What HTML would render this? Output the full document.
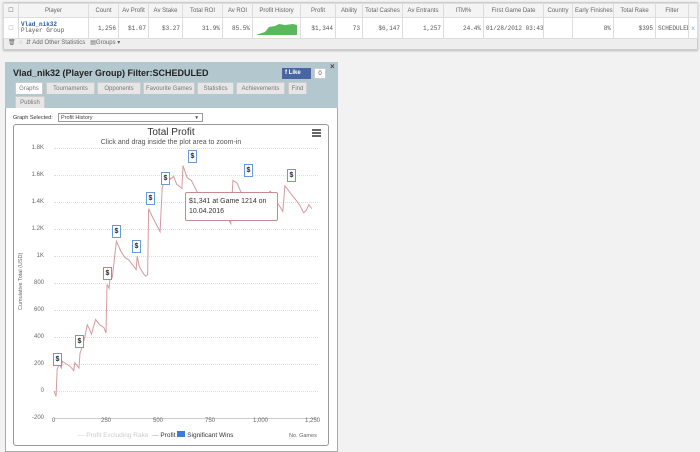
<!DOCTYPE html>
<html><head><meta charset="utf-8"><style>
*{box-sizing:border-box;margin:0;padding:0}
body{width:700px;height:450px;background:#f2f2f2;font-family:"Liberation Sans",sans-serif;position:relative;overflow:hidden;color:#444}
.abs{position:absolute}
table{border-collapse:collapse;font-size:6px}
td{border:1px solid #ddd;height:14px;padding:0 2px;white-space:nowrap;overflow:hidden}
.h td{background:#f4f4f4;color:#666;text-align:center;height:14px}
.r td{background:#fff;text-align:right;height:19px;font-family:"Liberation Mono",monospace;font-size:6px;color:#555}
.tab{position:absolute;height:12px;background:#e6e6e6;font-size:6px;color:#777;text-align:center;line-height:12px;border:1px solid #ccc;border-bottom:none}
.flag{position:absolute;width:9px;height:13px;background:#fff;border:1px solid #6a9ad8;font-size:7px;font-weight:bold;text-align:center;line-height:12px;color:#222}
.yl{position:absolute;font-size:6px;color:#666;text-align:right;width:20px;left:24px}
.xl{position:absolute;font-size:6px;color:#666;top:418px}
.gl{position:absolute;left:54px;width:264px;border-top:1px dotted #ddd}
</style></head><body>
<div class="abs" style="left:3px;top:2px;width:695px;height:48px;background:#eee;border:1px solid #ccc;box-shadow:0 1px 2px #bbb"></div>
<table class="abs" style="left:3px;top:3px;width:694px;table-layout:fixed">
<colgroup><col style="width:15px"><col style="width:70px"><col style="width:30px"><col style="width:30px"><col style="width:34px"><col style="width:40px"><col style="width:30px"><col style="width:48px"><col style="width:35px"><col style="width:27px"><col style="width:40px"><col style="width:41px"><col style="width:40px"><col style="width:60px"><col style="width:29px"><col style="width:41px"><col style="width:42px"><col style="width:33px"><col style="width:9px"></colgroup>
<tr class="h"><td>☐</td><td>Player</td><td>Count</td><td>Av Profit</td><td>Av Stake</td><td>Total ROI</td><td>Av ROI</td><td>Profit History</td><td>Profit</td><td>Ability</td><td>Total Cashes</td><td>Av Entrants</td><td>ITM%</td><td>First Game Date</td><td>Country</td><td>Early Finishes</td><td>Total Rake</td><td>Filter</td><td></td></tr>
<tr class="r"><td style="text-align:center;color:#aaa">☐</td><td style="text-align:left;line-height:6px"><b style="color:#2a5a9a">Vlad_nik32</b><br>Player Group</td><td>1,256</td><td>$1.07</td><td>$3.27</td><td>31.9%</td><td>85.5%</td><td style="padding:0"><svg width="48" height="18"><path d="M3 17 L12 14 L16 9 L22 8 L26 6 L32 7 L40 6 L44 7 L44 17Z" fill="#5cb85c"/></svg></td><td>$1,344</td><td>73</td><td>$6,147</td><td>1,257</td><td>24.4%</td><td>01/28/2012 03:43</td><td></td><td>8%</td><td>$395</td><td>SCHEDULED</td><td style="color:#69c">x</td></tr>
</table>
<div class="abs" style="left:8px;top:39px;font-size:6px;color:#666">🗑 &nbsp;◌ &nbsp;⇵ Add Other Statistics &nbsp; ▤Groups ▾</div>

<div class="abs" style="left:5px;top:62px;width:333px;height:390px;background:#fff;border:1px solid #aaa"></div>
<div class="abs" style="left:5px;top:62px;width:333px;height:46px;background:#b3c7ce"></div>
<div class="abs" style="left:13px;top:68px;font-size:9px;font-weight:bold;color:#222">Vlad_nik32 (Player Group) Filter:SCHEDULED</div>
<div class="abs" style="left:282px;top:68px;width:29px;height:11px;background:#4a66a0;color:#fff;font-size:6px;font-weight:bold;line-height:11px;padding-left:3px">f Like</div>
<div class="abs" style="left:314px;top:68px;width:12px;height:11px;background:#fff;border:1px solid #ccc;font-size:6px;text-align:center;line-height:10px">0</div>
<div class="abs" style="left:330px;top:62px;font-size:8px;font-weight:bold">×</div>
<div class="tab" style="left:15px;top:82px;width:28px;background:#fff">Graphs</div>
<div class="tab" style="left:46px;top:82px;width:49px">Tournaments</div>
<div class="tab" style="left:97px;top:82px;width:44px">Opponents</div>
<div class="tab" style="left:143px;top:82px;width:52px">Favourite Games</div>
<div class="tab" style="left:197px;top:82px;width:37px">Statistics</div>
<div class="tab" style="left:236px;top:82px;width:49px">Achievements</div>
<div class="tab" style="left:288px;top:82px;width:19px">Find</div>
<div class="tab" style="left:15px;top:96px;width:30px">Publish</div>

<div class="abs" style="left:13px;top:115px;font-size:5.5px;color:#333">Graph Selected:</div>
<div class="abs" style="left:58px;top:113px;width:145px;height:9px;border:1px solid #999;font-size:5.5px;padding-left:2px;line-height:8px">Profit History<span style="position:absolute;right:4px">▾</span></div>
<div class="abs" style="left:13px;top:124px;width:316px;height:322px;border:1px solid #999;border-radius:3px;background:#fff"></div>
<div class="abs" style="left:13px;top:127px;width:316px;text-align:center;font-size:10px;color:#333">Total Profit</div>
<div class="abs" style="left:13px;top:139px;width:316px;text-align:center;font-size:7px;color:#555">Click and drag inside the plot area to zoom-in</div>
<div class="abs" style="left:312px;top:129px;width:9px;height:8px;border-top:2px solid #666;border-bottom:2px solid #666"><div style="margin-top:1px;border-top:2px solid #666"></div></div>

<div class="gl" style="top:148px"></div><div class="gl" style="top:175px"></div><div class="gl" style="top:202px"></div><div class="gl" style="top:229px"></div><div class="gl" style="top:256px"></div><div class="gl" style="top:283px"></div><div class="gl" style="top:310px"></div><div class="gl" style="top:337px"></div><div class="gl" style="top:364px"></div><div class="gl" style="top:391px"></div>
<div class="abs" style="left:54px;top:418px;width:264px;border-top:1px solid #ccc"></div>
<div class="yl" style="top:145px">1.8K</div><div class="yl" style="top:172px">1.6K</div><div class="yl" style="top:199px">1.4K</div><div class="yl" style="top:226px">1.2K</div><div class="yl" style="top:253px">1K</div><div class="yl" style="top:280px">800</div><div class="yl" style="top:307px">600</div><div class="yl" style="top:334px">400</div><div class="yl" style="top:361px">200</div><div class="yl" style="top:388px">0</div><div class="yl" style="top:415px">-200</div>
<div class="abs" style="font-size:5.5px;color:#666;transform:rotate(-90deg);transform-origin:left top;top:310px;left:18px;white-space:nowrap">Cumulative Total (USD)</div>
<div class="xl" style="left:52px">0</div><div class="xl" style="left:101px">250</div><div class="xl" style="left:153px">500</div><div class="xl" style="left:205px">750</div><div class="xl" style="left:253px">1,000</div><div class="xl" style="left:305px">1,250</div>

<svg class="abs" style="left:0;top:0" width="700" height="450">
<g transform="translate(54,391) scale(0.208,-0.135)">
<polyline fill="none" stroke="#d49aa0" stroke-width="1" vector-effect="non-scaling-stroke" points="0,0 10,-40 15,160 25,200 35,170 40,220 60,200 80,180 95,150 100,210 115,180 120,170 125,280 130,300 135,330 145,380 160,490 170,460 180,420 200,530 220,490 240,470 250,430 255,790 265,760 270,850 280,840 300,1110 320,1040 340,990 360,970 380,930 395,900 400,1000 410,920 430,870 440,850 450,860 455,1350 470,1300 500,1210 510,1180 520,1500 530,1560 545,1610 560,1570 575,1590 590,1530 600,1520 615,1500 620,1670 640,1580 660,1560 690,1470 720,1420 760,1390 800,1380 830,1300 850,1240 860,1560 880,1540 900,1470 930,1430 960,1380 990,1420 1020,1450 1040,1480 1060,1420 1080,1380 1100,1330 1110,1520 1140,1460 1180,1380 1200,1320 1214,1341 1225,1380 1240,1350"/>
</g></svg>
<div class="flag" style="left:53px;top:353px">$</div>
<div class="flag" style="left:75px;top:335px">$</div>
<div class="flag" style="left:103px;top:267px">$</div>
<div class="flag" style="left:112px;top:225px">$</div>
<div class="flag" style="left:132px;top:240px">$</div>
<div class="flag" style="left:146px;top:192px">$</div>
<div class="flag" style="left:161px;top:172px">$</div>
<div class="flag" style="left:188px;top:150px">$</div>
<div class="flag" style="left:244px;top:164px">$</div>
<div class="flag" style="left:287px;top:169px">$</div>
<div class="abs" style="left:185px;top:192px;width:93px;height:29px;background:#fff;border:1px solid #c9898f;border-radius:2px;font-size:7px;color:#333;padding:4px 3px;line-height:10px">$1,341 at Game 1214 on 10.04.2016</div>

<div class="abs" style="left:78px;top:431px;font-size:6.5px;color:#ccc;white-space:nowrap">— Profit Excluding Rake &nbsp;<span style="color:#c9898f">—</span> <span style="color:#333">Profit</span> <span style="display:inline-block;width:8px;height:6px;background:#3a7bd5"></span> <span style="color:#333">Significant Wins</span></div>
<div class="abs" style="left:289px;top:433px;font-size:5.5px;color:#666">No. Games</div>
</body></html>
